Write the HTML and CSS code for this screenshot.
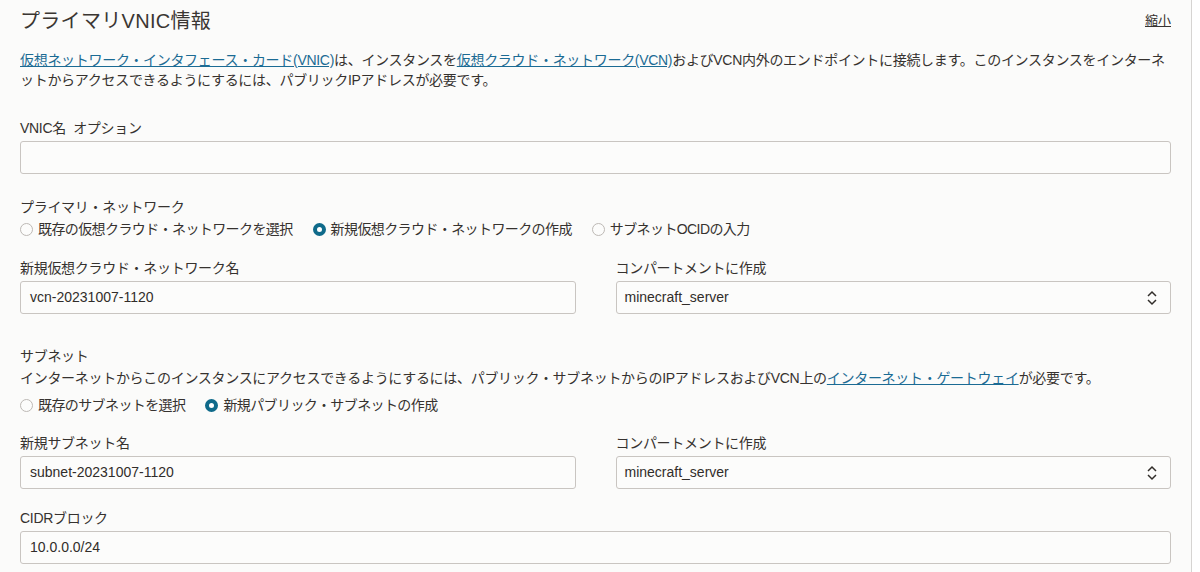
FILE: index.html
```html
<!DOCTYPE html>
<html lang="ja">
<head>
<meta charset="utf-8">
<link rel="stylesheet" href="styles.css">
</head>
<body>
<div class="panel">
  <div class="header">
    <h2 class="title">プライマリVNIC情報</h2>
    <a class="collapse" href="#">縮小</a>
  </div>
  <p class="intro"><a class="link" href="#">仮想ネットワーク・インタフェース・カード(VNIC)</a>は、インスタンスを<a class="link" href="#">仮想クラウド・ネットワーク(VCN)</a>およびVCN内外のエンドポイントに接続します。このインスタンスをインターネ<br>ットからアクセスできるようにするには、パブリックIPアドレスが必要です。</p>

  <div class="field field-vnic">
    <div class="label">VNIC名&nbsp; オプション</div>
    <div class="input"></div>
  </div>

  <div class="group group-network">
    <div class="label">プライマリ・ネットワーク</div>
    <div class="radios">
      <span class="radio"><span class="dot"></span>既存の仮想クラウド・ネットワークを選択</span>
      <span class="radio"><span class="dot on"></span>新規仮想クラウド・ネットワークの作成</span>
      <span class="radio"><span class="dot"></span>サブネットOCIDの入力</span>
    </div>
  </div>

  <div class="row row-vcn">
    <div class="field">
      <div class="label">新規仮想クラウド・ネットワーク名</div>
      <div class="input">vcn-20231007-1120</div>
    </div>
    <div class="field">
      <div class="label">コンパートメントに作成</div>
      <div class="input select">minecraft_server
        <svg class="chev" width="12" height="16" viewBox="0 0 12 16"><path d="M2 6 L6 2 L10 6 M2 10 L6 14 L10 10" fill="none" stroke="#312d2a" stroke-width="1.5"/></svg>
      </div>
    </div>
  </div>

  <div class="group group-subnet">
    <div class="label">サブネット</div>
    <div class="desc">インターネットからこのインスタンスにアクセスできるようにするには、パブリック・サブネットからのIPアドレスおよびVCN上の<a class="link" href="#">インターネット・ゲートウェイ</a>が必要です。</div>
    <div class="radios">
      <span class="radio"><span class="dot"></span>既存のサブネットを選択</span>
      <span class="radio"><span class="dot on"></span>新規パブリック・サブネットの作成</span>
    </div>
  </div>

  <div class="row row-subnet">
    <div class="field">
      <div class="label">新規サブネット名</div>
      <div class="input">subnet-20231007-1120</div>
    </div>
    <div class="field">
      <div class="label">コンパートメントに作成</div>
      <div class="input select">minecraft_server
        <svg class="chev" width="12" height="16" viewBox="0 0 12 16"><path d="M2 6 L6 2 L10 6 M2 10 L6 14 L10 10" fill="none" stroke="#312d2a" stroke-width="1.5"/></svg>
      </div>
    </div>
  </div>

  <div class="field field-cidr">
    <div class="label">CIDRブロック</div>
    <div class="input">10.0.0.0/24</div>
  </div>
</div>
</body>
</html>
```

FILE: styles.css
```css
html, body {
  margin: 0;
  padding: 0;
  background: #ffffff;
}
body {
  font-family: "Liberation Sans", "Noto Sans CJK JP", sans-serif;
  font-size: 14px;
  letter-spacing: -0.3px;
  color: #36322f;
}
.panel {
  width: 1151px;
  height: 572px;
  padding: 0 20px;
  background: #fbfbfa;
  border-right: 1px solid #d6d4d2;
  overflow: hidden;
}
.header {
  display: flex;
  justify-content: space-between;
  align-items: flex-start;
  height: 40px;
}
.title {
  margin: 0;
  padding-top: 7px;
  font-size: 20px;
  font-weight: normal;
  line-height: 28px;
  letter-spacing: 0.3px;
  color: #3a3632;
}
.collapse {
  margin-top: 12px;
  font-size: 13px;
  line-height: 18px;
  letter-spacing: 0;
  color: #36322f;
  text-decoration: underline;
}
.intro {
  margin: 10px 0 0;
  line-height: 20px;
}
.link {
  color: #1b6b94;
  text-decoration: underline;
}
.label {
  line-height: 20px;
  height: 20px;
  margin-bottom: 3px;
  white-space: nowrap;
}
.input {
  box-sizing: border-box;
  height: 33px;
  border: 1px solid #c9c5c1;
  border-radius: 3px;
  background: #fcfcfb;
  padding: 0 9px;
  line-height: 31px;
  font-family: "Liberation Sans", sans-serif;
  font-size: 14px;
  letter-spacing: 0;
  color: #312d2a;
  display: flex;
  align-items: center;
  justify-content: space-between;
}
.select {
  padding-left: 8px;
  padding-right: 12px;
}
.chev {
  display: block;
}
.field-vnic {
  margin-top: 28px;
}
.group .label {
  margin-bottom: 2px;
}
.group-network {
  margin-top: 23px;
}
.radios {
  display: flex;
  gap: 20px;
  line-height: 20px;
  height: 20px;
  letter-spacing: -0.6px;
}
.radio {
  display: inline-flex;
  align-items: center;
  gap: 5px;
  white-space: nowrap;
}
.dot {
  box-sizing: border-box;
  width: 13px;
  height: 13px;
  border-radius: 50%;
  border: 1px solid #bdb9b5;
  background: #fcfcfb;
}
.dot.on {
  border: 4px solid #0f6a8a;
  background: #ffffff;
}
.row {
  display: flex;
  gap: 40px;
}
.row .field {
  flex: 1;
}
.row-vcn {
  margin-top: 19px;
}
.group-subnet {
  margin-top: 32px;
}
.desc {
  line-height: 20px;
  height: 20px;
  margin-bottom: 7px;
  white-space: nowrap;
}
.row-subnet {
  margin-top: 18px;
}
.field-cidr {
  margin-top: 19px;
}
```
